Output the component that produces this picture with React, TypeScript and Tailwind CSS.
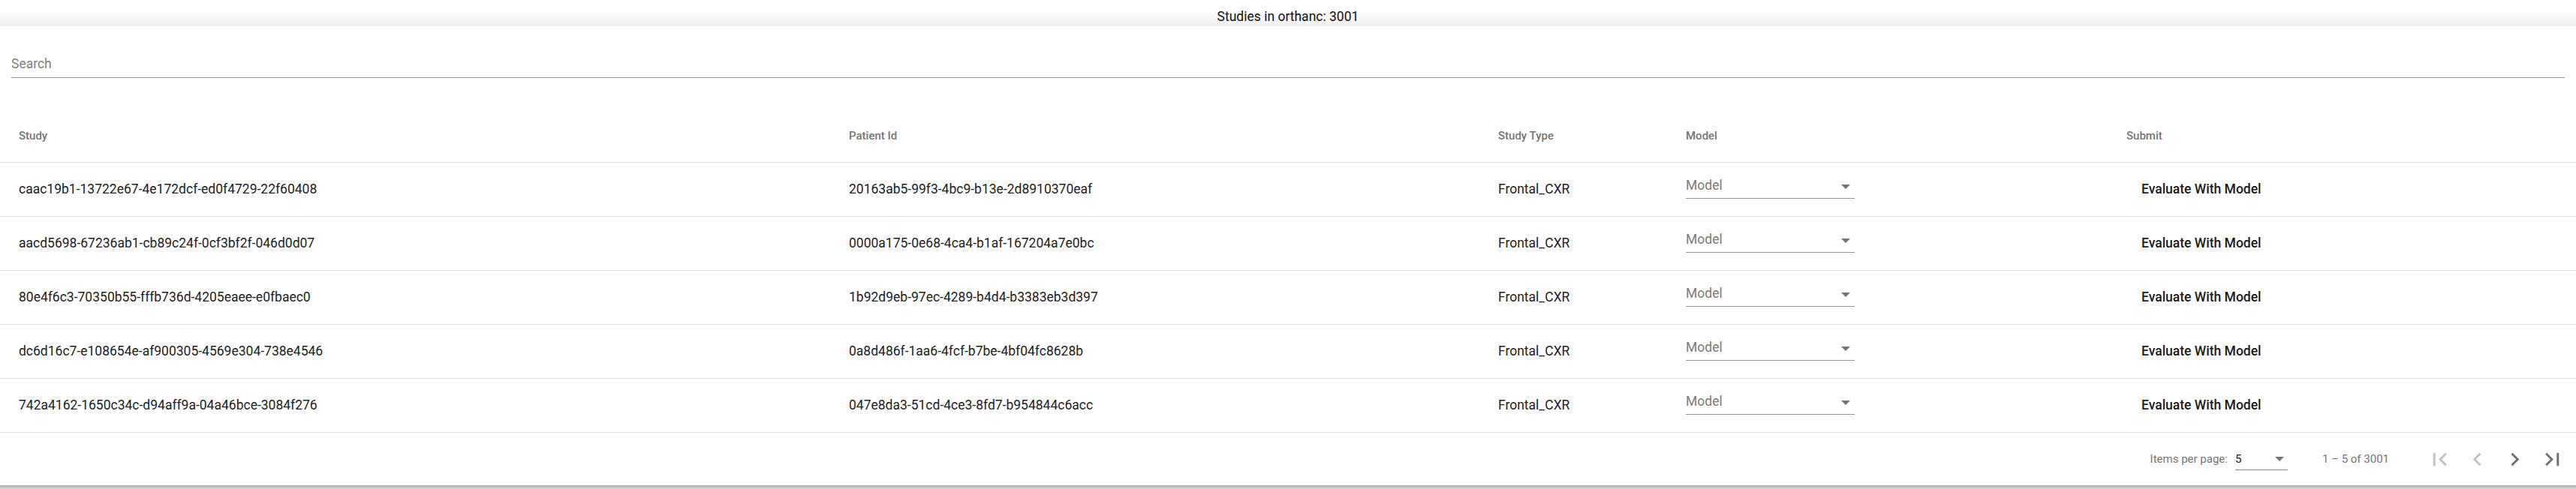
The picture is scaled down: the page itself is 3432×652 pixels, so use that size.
import React from "react";

const rows = [
  ["caac19b1-13722e67-4e172dcf-ed0f4729-22f60408", "20163ab5-99f3-4bc9-b13e-2d8910370eaf"],
  ["aacd5698-67236ab1-cb89c24f-0cf3bf2f-046d0d07", "0000a175-0e68-4ca4-b1af-167204a7e0bc"],
  ["80e4f6c3-70350b55-fffb736d-4205eaee-e0fbaec0", "1b92d9eb-97ec-4289-b4d4-b3383eb3d397"],
  ["dc6d16c7-e108654e-af900305-4569e304-738e4546", "0a8d486f-1aa6-4fcf-b7be-4bf04fc8628b"],
  ["742a4162-1650c34c-d94aff9a-04a46bce-3084f276", "047e8da3-51cd-4ce3-8fd7-b954844c6acc"],
];

const grid = "grid grid-cols-[1131px_865px_250px_587px_1fr] items-center";

function Icon({ d, color }: { d: string; color: string }) {
  return (
    <div className="w-[50px] h-[50px] flex items-center justify-center">
      <svg width="35" height="35" viewBox="0 0 24 24" fill={color}>
        <path d={d} />
      </svg>
    </div>
  );
}

export default function App() {
  return (
    <div className="w-[3432px] h-[652px] bg-white overflow-hidden font-['Roboto',sans-serif]">
      <div className="h-[35px] bg-gradient-to-b from-white from-40% to-[#efefef] flex justify-center pt-[12px]">
        <span className="text-[17.5px] leading-[20px] text-[#111]">Studies in orthanc: 3001</span>
      </div>

      <div className="px-[15px] mt-[40px]">
        <div className="border-b border-[#949494] pb-[8px]">
          <div className="text-[17.5px] leading-[20px] text-[#7f7f7f]">Search</div>
        </div>
      </div>

      <div className={`${grid} mt-[42px] h-[71px] border-b border-[#e0e0e0] text-[15px] font-medium text-[#757575]`}>
        <div className="pl-[25px]">Study</div>
        <div>Patient Id</div>
        <div>Study Type</div>
        <div>Model</div>
        <div>Submit</div>
      </div>

      {rows.map((r, i) => (
        <div key={i} className={`${grid} h-[72px] border-b border-[#e0e0e0] text-[17.5px] text-[#212121]`}>
          <div className="pl-[25px]">{r[0]}</div>
          <div>{r[1]}</div>
          <div>Frontal_CXR</div>
          <div>
            <div className="w-[225px] mb-[3px] border-b border-[#949494] pb-[7px] flex items-center justify-between">
              <span className="leading-[20px] text-[#7a7a7a]">Model</span>
              <span className="w-0 h-0 mr-[6px] mt-[3px] border-x-[6px] border-t-[6px] border-x-transparent border-t-[#757575]" />
            </div>
          </div>
          <div>
            <span className="pl-[20px] font-medium text-[#1a1a1a]">Evaluate With Model</span>
          </div>
        </div>
      ))}

      <div className="h-[70px] flex items-center justify-end pr-[7px] text-[15px] text-[#757575]">
        <span>Items per page:</span>
        <div className="ml-[10px] mt-[6px] w-[70px] border-b border-[#8a8a8a] pb-[5px] flex items-center justify-between">
          <span className="leading-[18px] text-[#212121]">5</span>
          <span className="w-0 h-0 mr-[5px] border-x-[6px] border-t-[6px] border-x-transparent border-t-[#757575]" />
        </div>
        <span className="ml-[46px] mr-[42px]">1 – 5 of 3001</span>
        <Icon d="M18.41 16.59L13.82 12l4.59-4.59L17 6l-6 6 6 6zM6 6h2v12H6z" color="#c2c2c2" />
        <Icon d="M15.41 7.41L14 6l-6 6 6 6 1.41-1.41L10.83 12z" color="#c2c2c2" />
        <Icon d="M10 6L8.59 7.41 13.17 12l-4.58 4.59L10 18l6-6z" color="#6f6f6f" />
        <Icon d="M5.59 7.41L10.18 12l-4.59 4.59L7 18l6-6-6-6zM16 6h2v12h-2z" color="#6f6f6f" />
      </div>
      <div className="h-[5px] bg-gradient-to-b from-[#a9a9a9] to-[#dcdcdc]" />
    </div>
  );
}
